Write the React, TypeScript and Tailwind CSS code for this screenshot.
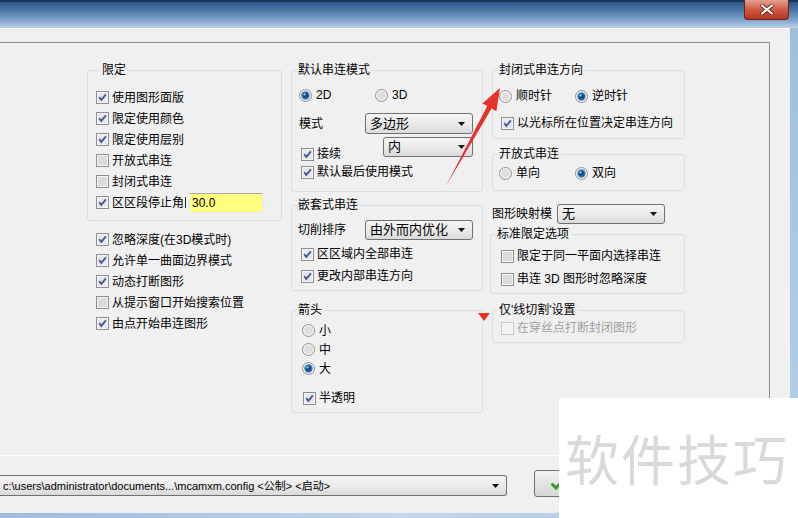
import React from "react";

const Check = ({ on = false, off = false }: { on?: boolean; off?: boolean }) => (
  <svg width="13" height="13" viewBox="0 0 13 13" className="shrink-0">
    <rect x="0.5" y="0.5" width="12" height="12" fill="#f6f6f6" stroke={off ? "#c8c8c8" : "#8e8f8f"} />
    <rect x="2" y="2" width="9" height="9" fill={off ? "#f2f2f2" : on ? "#e6e8ee" : "#d9dcdf"} />
    {on && <path d="M3.2 6.2 L5.3 8.9 L9.9 3.3" fill="none" stroke="#4a5e96" strokeWidth="1.9" />}
  </svg>
);

const Radio = ({ on = false }: { on?: boolean }) => (
  <svg width="13" height="13" viewBox="0 0 13 13" className="shrink-0">
    <circle cx="6.5" cy="6.5" r="6" fill="#f4f4f4" stroke="#8e8f8f" />
    <circle cx="6.5" cy="6.5" r="4.2" fill={on ? "#3a7cba" : "#dedede"} />
    {on && <circle cx="6.5" cy="6.5" r="2.7" fill="#164a80" />}
    {on && <circle cx="5.5" cy="5.4" r="1.1" fill="#9ad4ff" />}
  </svg>
);

const Combo = ({ text, className }: { text: string; className: string }) => (
  <div
    className={`flex items-center justify-between rounded-[3px] border border-[#707070] bg-linear-to-b from-[#f4f4f4] via-[#ebebeb] to-[#dadada] pl-[4px] pr-[7px] text-[13px] ${className}`}
  >
    <span className="whitespace-nowrap">{text}</span>
    <svg width="7" height="4" viewBox="0 0 7 4" className="shrink-0">
      <path d="M0 0h7L3.5 4z" fill="#111" />
    </svg>
  </div>
);

const CheckRow = ({ label, on = false, off = false, className = "" }: { label: string; on?: boolean; off?: boolean; className?: string }) => (
  <div className={`flex h-[18px] items-center gap-[3px] whitespace-nowrap ${off ? "text-[#a0a0a0]" : ""} ${className}`}>
    <Check on={on} off={off} />
    <span>{label}</span>
  </div>
);

const RadioItem = ({ label, on = false, className = "" }: { label: string; on?: boolean; className?: string }) => (
  <div className={`flex items-center gap-[4px] whitespace-nowrap ${className}`}>
    <Radio on={on} />
    <span>{label}</span>
  </div>
);

const Group = ({ title, className = "", children }: { title: string; className?: string; children: React.ReactNode }) => (
  <div className={`rounded-[3px] border border-[#d5dfe5] ${className}`}>
    <div className="-mt-[8px] ml-[4px] w-fit bg-[#f0f0f0] px-[2px] leading-[14px] whitespace-nowrap">{title}</div>
    {children}
  </div>
);

export default function App() {
  return (
    <div className="relative flex h-[518px] w-[798px] flex-col overflow-hidden bg-[#f0f0f0] font-['Liberation_Sans','Noto_Sans_CJK_SC',sans-serif] text-[12px] leading-[14px] text-black">
      {/* title bar */}
      <div className="flex h-[28px] shrink-0 justify-end border-t-[2px] border-[#1c3454] bg-[linear-gradient(180deg,#2c5788_0%,#4a78a8_35%,#85a9ce_72%,#bcd3ea_100%)] pr-[9px]">
        <div className="-mt-[2px] flex h-[20px] w-[45px] items-center justify-center rounded-b-[4px] border border-t-0 border-[#6b2219] bg-linear-to-b from-[#e3a090] via-[#cf5a44] to-[#b8341f]">
          <svg width="14" height="11" viewBox="0 0 14 11">
            <path d="M2 1.5 L12 9.5 M12 1.5 L2 9.5" stroke="#5a1a12" strokeWidth="3.6" strokeLinecap="round" />
            <path d="M2 1.5 L12 9.5 M12 1.5 L2 9.5" stroke="#ffffff" strokeWidth="2.2" strokeLinecap="round" />
          </svg>
        </div>
      </div>

      <div className="flex h-[485px] shrink-0">
        {/* client area */}
        <div className="flex w-[790px] flex-col border-t border-white pt-[13px]">
          <div className="flex h-[414px] w-[770px] border-t border-r border-b border-[#898c95] border-b-white pl-[87px] pt-[27px]">
            {/* column 1 */}
            <div className="flex w-[195px] flex-col">
              <Group title="限定" className="h-[151px] pl-[8px]">
                <div className="mt-[10px] flex flex-col">
                  <CheckRow label="使用图形面版" on className="h-[21px]" />
                  <CheckRow label="限定使用颜色" on className="h-[21px]" />
                  <CheckRow label="限定使用层别" on className="h-[21px]" />
                  <CheckRow label="开放式串连" className="h-[21px]" />
                  <CheckRow label="封闭式串连" className="h-[21px]" />
                  <div className="flex h-[21px] items-center gap-[3px]">
                    <Check on />
                    <span className="whitespace-nowrap">区区段停止角</span>
                    <div className="-ml-[2px] h-[11px] w-[1px] bg-[#222]" />
                    <div className="flex h-[20px] w-[74px] items-center border border-[#e3e9ef] border-t-[#abadb3] bg-[#ffff80] pl-[2px]">30.0</div>
                  </div>
                </div>
              </Group>
              <div className="mt-[8px] flex flex-col pl-[9px]">
                <CheckRow label="忽略深度(在3D模式时)" on className="h-[21px]" />
                <CheckRow label="允许单一曲面边界模式" on className="h-[21px]" />
                <CheckRow label="动态打断图形" on className="h-[21px]" />
                <CheckRow label="从提示窗口开始搜索位置" className="h-[21px]" />
                <CheckRow label="由点开始串连图形" on className="h-[21px]" />
              </div>
            </div>

            {/* column 2 */}
            <div className="ml-[9px] flex w-[192px] flex-col">
              <Group title="默认串连模式" className="h-[122px]">
                <div className="mt-[9px] flex h-[18px] items-center pl-[7px]">
                  <RadioItem label="2D" on className="w-[76px]" />
                  <RadioItem label="3D" />
                </div>
                <div className="mt-[9px] flex items-center pl-[7px]">
                  <span className="w-[66px]">模式</span>
                  <Combo text="多边形" className="h-[21px] w-[108px]" />
                </div>
                <div className="mt-[3px] flex items-start pl-[9px]">
                  <CheckRow label="接续" on className="mt-[8px] w-[82px]" />
                  <Combo text="内" className="h-[20px] w-[90px]" />
                </div>
                <CheckRow label="默认最后使用模式" on className="pl-[9px]" />
              </Group>
              <Group title="嵌套式串连" className="mt-[13px] h-[86px]">
                <div className="mt-[8px] flex items-center pl-[6px]">
                  <span className="w-[67px] whitespace-nowrap">切削排序</span>
                  <Combo text="由外而内优化" className="h-[20px] w-[108px]" />
                </div>
                <div className="mt-[3px] flex flex-col pl-[9px]">
                  <CheckRow label="区区域内全部串连" on className="h-[22px]" />
                  <CheckRow label="更改内部串连方向" on className="h-[22px]" />
                </div>
              </Group>
              <Group title="箭头" className="mt-[19px] h-[103px]">
                <div className="mt-[4px] flex flex-col pl-[10px]">
                  <RadioItem label="小" className="h-[19px]" />
                  <RadioItem label="中" className="h-[19px]" />
                  <RadioItem label="大" on className="h-[19px]" />
                </div>
                <CheckRow label="半透明" on className="mt-[11px] pl-[11px]" />
              </Group>
            </div>

            {/* column 3 */}
            <div className="ml-[9px] flex w-[193px] flex-col">
              <Group title="封闭式串连方向" className="h-[69px]">
                <div className="mt-[10px] flex h-[18px] items-center pl-[6px]">
                  <RadioItem label="顺时针" className="w-[76px]" />
                  <RadioItem label="逆时针" on />
                </div>
                <CheckRow label="以光标所在位置决定串连方向" on className="mt-[9px] pl-[8px]" />
              </Group>
              <Group title="开放式串连" className="mt-[15px] h-[37px]">
                <div className="mt-[3px] flex h-[18px] items-center pl-[6px]">
                  <RadioItem label="单向" className="w-[76px]" />
                  <RadioItem label="双向" on />
                </div>
              </Group>
              <div className="mt-[13px] flex h-[20px] items-center">
                <span className="w-[65px] whitespace-nowrap">图形映射模</span>
                <Combo text="无" className="h-[20px] w-[108px]" />
              </div>
              <Group title="标准限定选项" className="mt-[10px] -ml-[2px] h-[60px]">
                <div className="mt-[6px] flex flex-col gap-[5px] pl-[10px]">
                  <CheckRow label="限定于同一平面内选择串连" />
                  <CheckRow label="串连 3D 图形时忽略深度" />
                </div>
              </Group>
              <Group title="仅'线切割'设置" className="mt-[16px] h-[33px]">
                <CheckRow label="在穿丝点打断封闭图形" off className="mt-[2px] pl-[8px]" />
              </Group>
            </div>
          </div>

          {/* bottom row */}
          <div className="mt-[14px] flex items-start">
            <div className="mt-[5px] flex h-[21px] w-[507px] items-center justify-between rounded-r-[3px] border border-l-0 border-[#707070] bg-linear-to-b from-[#f4f4f4] via-[#ebebeb] to-[#dadada] pl-[3px] pr-[7px] text-[11px]">
              <span className="whitespace-nowrap">c:\users\administrator\documents...\mcamxm.config &lt;公制&gt; &lt;启动&gt;</span>
              <svg width="7" height="4" viewBox="0 0 7 4">
                <path d="M0 0h7L3.5 4z" fill="#111" />
              </svg>
            </div>
            <div className="ml-[27px] flex h-[27px] w-[80px] items-center rounded-[3px] border border-[#707070] bg-linear-to-b from-[#f2f2f2] to-[#d6d6d6] pl-[16px]">
              <svg width="14" height="12" viewBox="0 0 14 12">
                <path d="M1.5 6.5 L5 10 L12.5 2" fill="none" stroke="#3a9a2a" strokeWidth="3" strokeLinecap="round" />
              </svg>
            </div>
          </div>
        </div>
        {/* right frame */}
        <div className="w-[8px] bg-linear-to-b from-[#9fbfdf] to-[#b8d0e8]" />
      </div>
      <div className="h-[5px] shrink-0 bg-linear-to-r from-[#9dbcdc] via-[#c3d7ec] to-[#a9c5e2]" />

      {/* annotation arrows */}
      <svg className="pointer-events-none absolute left-0 top-0" width="798" height="518" viewBox="0 0 798 518">
        <polygon points="446,186 487.2,106.1 482.4,103.4 500,88 496.4,111.2 491.6,108.5" fill="#e5322b" />
        <polygon points="478,313 490,313 484,321" fill="#e5322b" />
      </svg>

      {/* watermark */}
      <div className="absolute left-[559px] top-[398px] flex h-[120px] w-[239px] items-center bg-white pl-[6px] font-['Noto_Sans_CJK_SC',sans-serif] text-[54px] leading-none tracking-[2px] text-[#d9d9d9]">
        软件技巧
      </div>
    </div>
  );
}
